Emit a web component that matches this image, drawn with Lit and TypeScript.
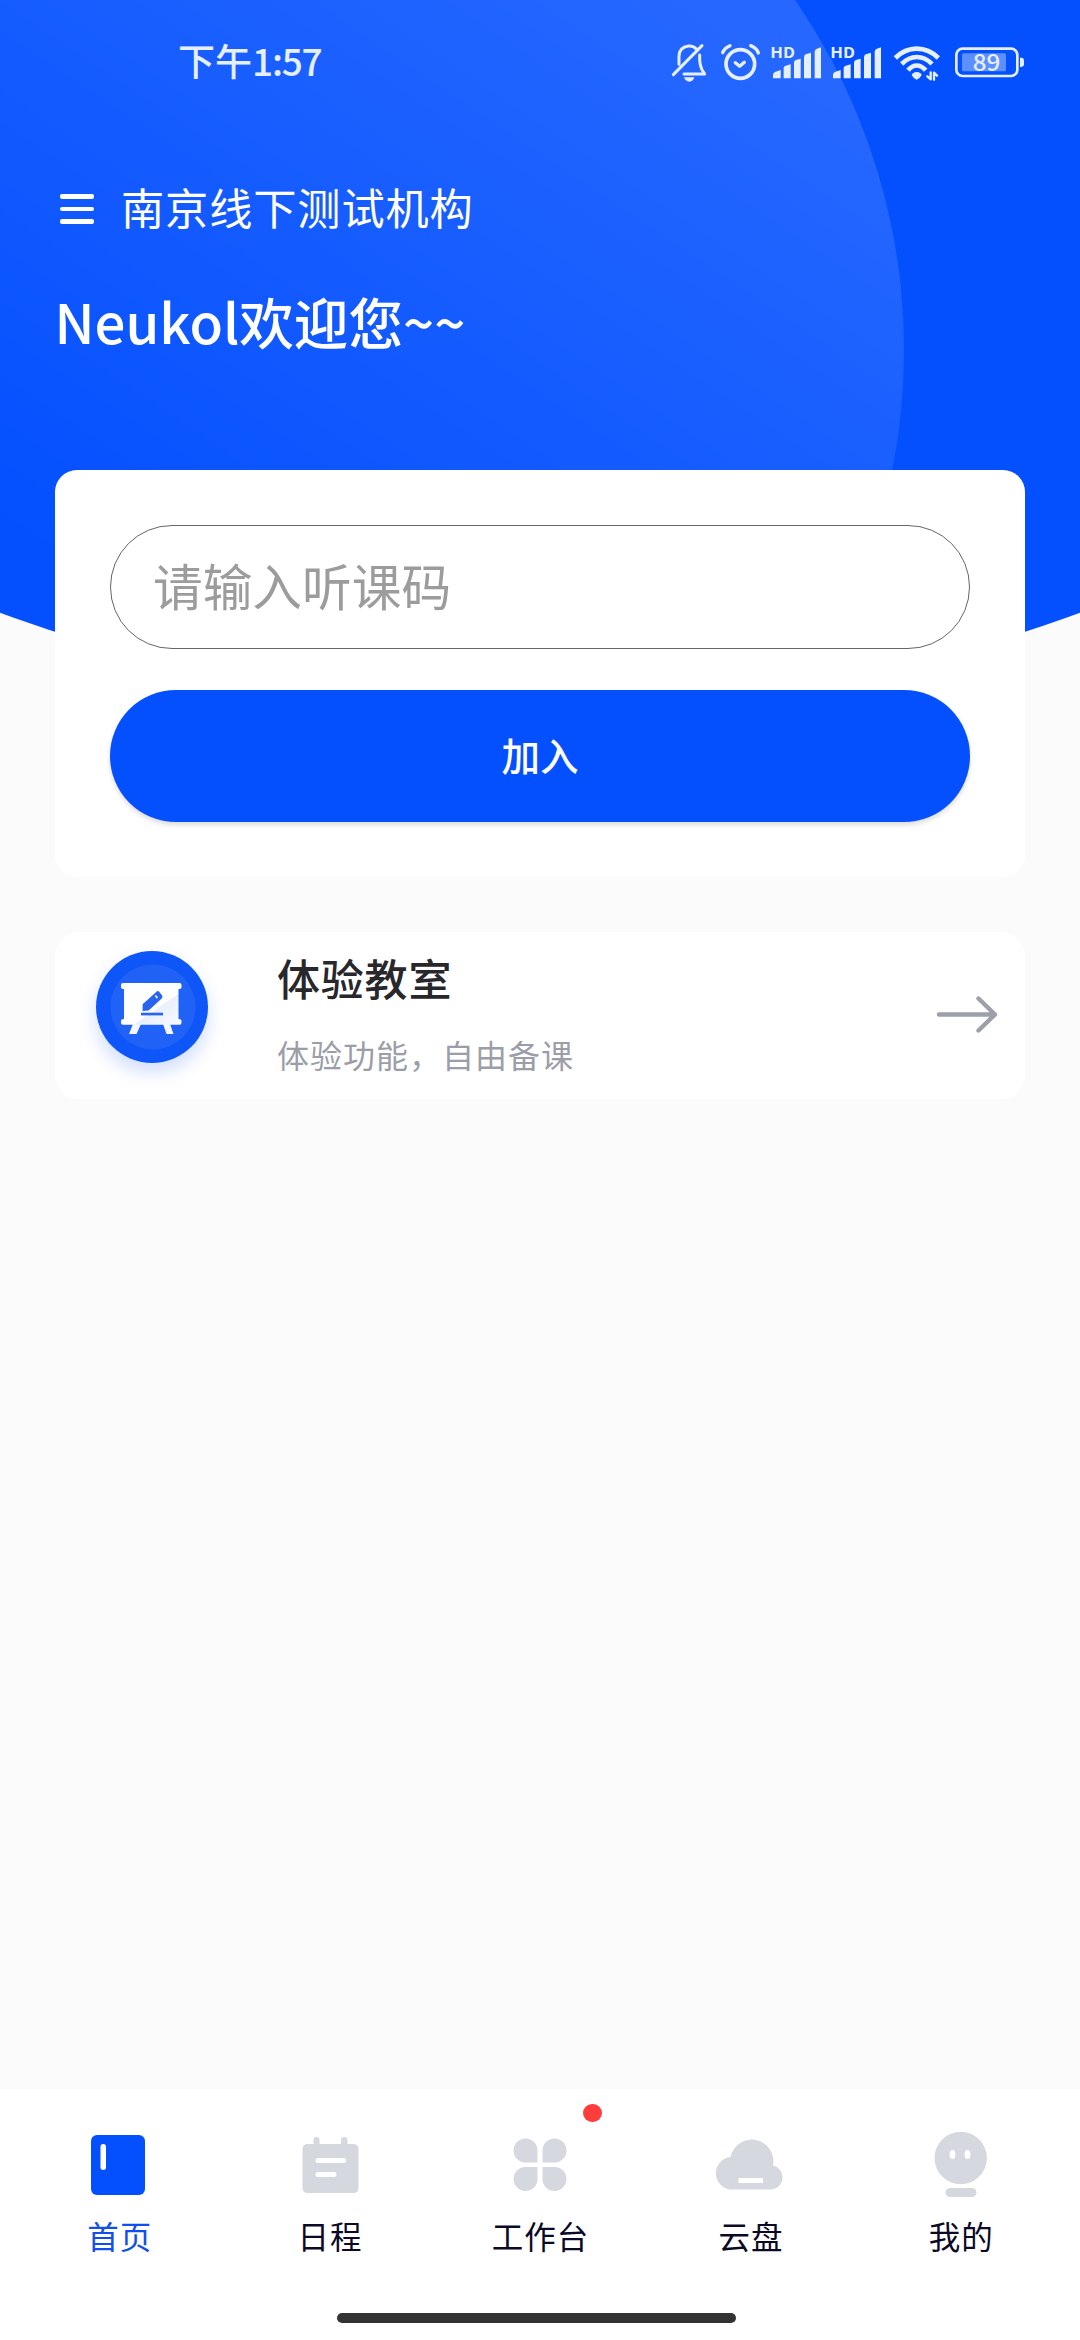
import { LitElement, html, css, svg } from "lit";
import { customElement, property } from "lit/decorators.js";

const FONT = css`"Noto Sans CJK SC", "Noto Sans", sans-serif`;

@customElement("status-bar")
class StatusBar extends LitElement {
  static styles = css`
    :host { display: flex; justify-content: space-between; height: 120px; padding: 0 55px 0 178px; box-sizing: border-box; font-family: ${FONT}; color: #e6efff; }
    .time { font-size: 37px; line-height: 120px; font-weight: 500; white-space: nowrap; }
    .clock { letter-spacing: -1.200px; }
    .icons { display: flex; gap: 10px; align-items: flex-start; padding-top: 41.670px; }
    svg { display: block; height: 40px; overflow: visible; }
    .w40 { width: 40px; } .w50 { width: 50px; } .w54 { width: 54px; } .w71 { width: 71px; }
    .line { fill: none; stroke: #e6efff; stroke-linecap: round; stroke-linejoin: round; }
    .butt { stroke-linecap: butt; }
    .solid { fill: #e6efff; }
    .hd { font: 600 45px ${FONT}; fill: #e6efff; }
    .pct { font: 500 69px ${FONT}; fill: #e6efff; }
  `;
  private signal() {
    return html`<svg class="w50" viewBox="360 65 150 120">
      <text class="hd" x="361" y="114" textLength="74" lengthAdjust="spacingAndGlyphs">HD</text>
      <path class="solid" d="M369 174V162Q370 157 375 155L392 149V174Z"/>
      <path class="solid" d="M401 174V142Q402 137 407 136L422 132V174Z"/>
      <path class="solid" d="M432 174V126Q433 121 437 119L452 115V174Z"/>
      <path class="solid" d="M462 174V110Q463 104 467 102L483 97V174Z"/>
      <path class="solid" d="M494 174V94Q495 88 499 86L513 81V174Z"/>
    </svg>`;
  }
  render() {
    return html`
      <span class="time">下午<span class="clock">1:57</span></span>
      <div class="icons">
        <svg class="w40" viewBox="60 65 120 120">
          <path class="line" stroke-width="9" d="M87 132V108Q88 80 115 77Q131 76 139 86M149 104Q148 133 156 148L164 161H102M70 163L156 76"/>
          <path class="solid" d="M102 171H133Q129 184 118 184Q107 184 102 171Z"/>
        </svg>
        <svg class="w40" viewBox="210 65 120 120">
          <circle class="line" stroke-width="11" cx="271" cy="131" r="43"/>
          <path class="line" stroke-width="10" d="M256 127L269 138L283 126M218 97Q223 83 240 76M302 76Q320 83 325 98"/>
        </svg>
        ${this.signal()}${this.signal()}
        <svg class="w54" viewBox="720 65 162 120">
          <path class="line butt" stroke-width="14" d="M736 113Q764 85 800 85Q837 85 865 113M755 131Q776 110 800 110Q826 110 846 131M774 150Q786 135.500 800 135.500Q815 135.500 827 150"/>
          <path class="solid" d="M785 164Q788 156 800 155Q813 156 815 164Q811 173 800 178Q789 173 785 164Z"/>
          <path class="line" stroke-width="7" d="M842 156V177L832 168M852 178V157L861 166"/>
        </svg>
        <svg class="w71" viewBox="912 65 213 120">
          <rect class="line" stroke-width="8" x="919" y="85" width="183" height="82" rx="19"/>
          <rect x="936" y="99" width="132" height="54" rx="5" fill="#5c8fff"/>
          <path class="solid" d="M1110 112H1115Q1122 113 1122 120V132Q1122 139 1115 140H1110Z"/>
          <text class="pct" x="968" y="152" textLength="83" lengthAdjust="spacingAndGlyphs">89</text>
        </svg>
      </div>`;
  }
}

@customElement("join-card")
class JoinCard extends LitElement {
  static styles = css`
    :host { display: flex; flex-direction: column; gap: 41px; height: 407px; padding: 55px; box-sizing: border-box; background: #fff; border-radius: 22px; font-family: ${FONT}; }
    .field { height: 124px; box-sizing: border-box; border: 1px solid #666; border-radius: 62px; padding: 0 40px 7px 42px; width: 100%; background: #fff; font-family: inherit; font-size: 49.700px; color: #222; outline: none; }
    .field::placeholder { color: #9c9c9c; opacity: 1; }
    .join { height: 132px; border: 0; border-radius: 66px; background: #0450ff; color: #fff; font-family: inherit; font-weight: 500; font-size: 38.500px; padding: 0 0 4px; box-shadow: 0 3px 5px rgba(0, 0, 0, 0.14); }
  `;
  render() {
    return html`<input class="field" type="text" placeholder="请输入听课码" /><button class="join">加入</button>`;
  }
}

@customElement("room-card")
class RoomCard extends LitElement {
  static styles = css`
    :host { display: flex; align-items: flex-start; height: 167px; padding: 19.500px 26px 0 41px; box-sizing: border-box; background: #fff; border-radius: 24px; font-family: ${FONT}; }
    .badge { display: block; width: 112px; height: 112px; overflow: visible; border-radius: 50%; box-shadow: 0 9px 18px rgba(20, 85, 255, 0.2); }
    .copy { flex: 1; display: flex; flex-direction: column; padding-left: 69px; }
    .title { font-size: 43px; letter-spacing: 0.800px; font-weight: 500; line-height: 52px; color: #28282c; white-space: nowrap; }
    .sub { margin-top: 26px; font-size: 32px; letter-spacing: 1px; line-height: 50px; color: #9b9ea9; white-space: nowrap; }
    .arrow { display: block; width: 64px; height: 44px; margin-top: 40.500px; }
  `;
  render() {
    return html`
      <svg class="badge" viewBox="0 0 112 112">
        <defs><linearGradient id="board" x1="0" y1="0" x2="1" y2="1"><stop offset=".6" stop-color="#fff"/><stop offset=".61" stop-color="#e9effe"/><stop offset="1" stop-color="#f8faff"/></linearGradient></defs>
        <circle cx="56" cy="56" r="56" fill="#0f56f9"/>
        <circle cx="57" cy="56" r="42.500" fill="#2162f6"/>
        <path fill="#f4f7ff" d="M37 73H45L40.500 83H33ZM67 73H74L77.500 83H70.500Z"/>
        <path fill="url(#board)" d="M27 32H83.500Q85.500 32 85.500 34V36Q85.500 38 82.500 38V68Q85.500 68 85.500 70V71.500Q85.500 73.700 83.500 73.700H27Q25 73.700 25 71.500V70Q25 68 28 68V38Q25 38 25 36V34Q25 32 27 32Z"/>
        <path fill="#2864f0" d="M46.600 60V53.300L60.200 40.900Q61.800 39.300 63.400 41L66 44.200Q67.300 45.800 65.700 47.400L52.600 59.500Z"/>
        <path stroke="#fff" stroke-width="1.600" d="M59.300 44.500L61.500 47"/>
        <path fill="#2864f0" d="M45 61.700H67V64.400H45Z"/>
      </svg>
      <div class="copy"><div class="title">体验教室</div><div class="sub">体验功能，自由备课</div></div>
      <svg class="arrow" viewBox="934 992 64 44"><path fill="none" stroke="#9ca0a8" stroke-width="4.400" stroke-linecap="round" stroke-linejoin="round" d="M938 1014.500H994M977.500 998.500L994 1014.500L977.500 1030.500"/></svg>`;
  }
}

const ICONS: Record<string, unknown> = {
  home: svg`<rect x="12" y="10" width="54" height="60" rx="6" fill="#0450ff"/><rect x="21.500" y="19" width="5.500" height="26" rx="2.700" fill="#fff"/>`,
  schedule: svg`<path class="g" d="M23.500 19V15Q23.500 12 26.500 12T29.500 15V19H51V15Q51 12 54.200 12T57.500 15V19H63Q68.500 19 68.500 24.500V62.500Q68.500 68 63 68H18Q12.500 68 12.500 62.500V24.500Q12.500 19 18 19Z"/><path stroke="#fff" stroke-width="5" stroke-linecap="round" d="M28 35.500H53.500M28 49.500H44"/>`,
  work: svg`<path class="g" d="M37.500 37.500H25.500A12 12 0 1 1 37.500 25.500ZM42.500 37.500V25.500A12 12 0 1 1 54.500 37.500ZM37.500 42V54.500A12 12 0 1 1 25.500 42ZM42.500 42H54.500A12 12 0 1 1 42.500 54.500Z"/>`,
  cloud: svg`<path class="g" d="M21.500 64.500A16.300 16.300 0 0 1 20.500 32A21.500 21.500 0 0 1 63 40.500A12.200 12.200 0 0 1 62 64.500Z"/><path stroke="#fff" stroke-width="5" d="M28.500 55.500H53"/>`,
  me: svg`<circle class="g" cx="39.700" cy="33" r="26.200"/><ellipse fill="#fff" cx="31.500" cy="29.500" rx="2.900" ry="4.500"/><ellipse fill="#fff" cx="46.500" cy="29.500" rx="2.900" ry="4.500"/><rect class="g" x="24.500" y="63" width="31" height="9" rx="4.500"/>`,
};

@customElement("tab-item")
class TabItem extends LitElement {
  @property() icon = "home";
  @property() label = "";
  @property({ type: Boolean, reflect: true }) active = false;
  @property({ type: Boolean }) dot = false;
  static styles = css`
    :host { display: flex; flex-direction: column; align-items: center; flex: 1; position: relative; color: #0b0a26; font-family: ${FONT}; }
    :host([active]) { color: #114fec; }
    svg { display: block; width: 80px; height: 80px; overflow: visible; }
    .g { fill: #d5d8df; }
    .label { margin-top: 10px; padding-left: 1px; height: 40px; line-height: 40px; font-size: 31.500px; letter-spacing: 1px; white-space: nowrap; }
    .dot { position: absolute; left: 148.500px; top: -21px; width: 19px; height: 18px; border-radius: 9px; background: #ff3d3b; }
  `;
  render() {
    return html`<svg viewBox="0 0 80 80">${ICONS[this.icon]}</svg><span class="label">${this.label}</span>${this.dot ? html`<i class="dot"></i>` : ""}`;
  }
}

@customElement("app-root")
class AppRoot extends LitElement {
  static styles = css`
    :host { display: flex; flex-direction: column; position: relative; width: 1080px; height: 2340px; overflow: hidden; background: #fbfbfb; font-family: ${FONT}; }
    .backdrop { position: absolute; left: 0; top: 0; width: 1080px; height: 720px; }
    .top, .cards { position: relative; }
    .top { height: 470px; color: #fff; }
    .org { display: flex; align-items: center; gap: 27px; height: 60px; margin-top: 56px; padding-left: 60px; }
    .menu { display: flex; flex-direction: column; gap: 8px; width: 34px; padding-top: 6px; }
    .menu i { height: 4.500px; border-radius: 2px; background: #fff; }
    .name { font-size: 43.200px; letter-spacing: 0.900px; line-height: 60px; white-space: nowrap; }
    .hello { margin: 44.500px 0 0 54.500px; height: 80px; line-height: 80px; font-size: 54.600px; font-weight: 500; white-space: nowrap; }
    .cards { flex: 1; display: flex; flex-direction: column; gap: 54.500px; padding: 0 55px; }
    .tabs { display: flex; flex-direction: column; box-sizing: border-box; height: 251px; padding: 36px 14px 0; background: #fff; }
    .row { display: flex; height: 188px; }
    .pill { width: 399px; height: 10px; margin-left: 323px; border-radius: 5px; background: #333; }
  `;
  render() {
    return html`
      <svg class="backdrop" viewBox="0 0 1080 720">
        <defs>
          <clipPath id="arc"><circle cx="540" cy="-853" r="1562"/></clipPath>
          <linearGradient id="glow" gradientUnits="userSpaceOnUse" x1="170" y1="640" x2="640" y2="-60"><stop offset="0" stop-color="#fff" stop-opacity="0"/><stop offset="1" stop-color="#fff" stop-opacity=".135"/></linearGradient>
        </defs>
        <g clip-path="url(#arc)"><rect width="1080" height="720" fill="#0450ff"/><circle cx="288" cy="350" r="616" fill="url(#glow)"/></g>
      </svg>
      <section class="top">
        <status-bar></status-bar>
        <div class="org"><div class="menu"><i></i><i></i><i></i></div><span class="name">南京线下测试机构</span></div>
        <div class="hello">Neukol欢迎您~~</div>
      </section>
      <main class="cards"><join-card></join-card><room-card></room-card></main>
      <nav class="tabs">
        <div class="row">
          <tab-item active icon="home" label="首页"></tab-item>
          <tab-item icon="schedule" label="日程"></tab-item>
          <tab-item icon="work" label="工作台" dot></tab-item>
          <tab-item icon="cloud" label="云盘"></tab-item>
          <tab-item icon="me" label="我的"></tab-item>
        </div>
        <div class="pill"></div>
      </nav>`;
  }
}
